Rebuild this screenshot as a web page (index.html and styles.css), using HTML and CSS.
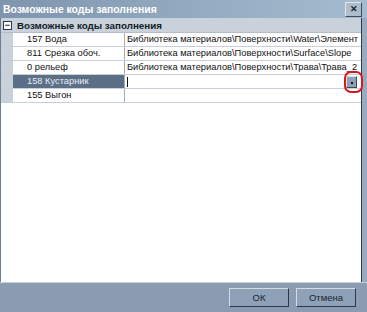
FILE: index.html
```html
<!DOCTYPE html>
<html lang="ru">
<head>
    <meta charset="UTF-8">
    <title>Возможные коды заполнения</title>
<link rel="stylesheet" href="styles.css">
</head>
<body>
    <div class="window">
        <div class="titlebar">
            <span class="title">Возможные коды заполнения</span>
            <span class="close">✕</span>
        </div>
        <div class="body">
            <div class="grid">
                <div class="category">
                    <span class="toggle">−</span>
                    <span class="cat-title">Возможные коды заполнения</span>
                </div>
                <div class="row">
                    <div class="gutter"></div>
                    <div class="name">157 Вода</div>
                    <div class="value">Библиотека материалов\Поверхности\Water\Элемент</div>
                </div>
                <div class="row">
                    <div class="gutter"></div>
                    <div class="name">811 Срезка обоч.</div>
                    <div class="value">Библиотека материалов\Поверхности\Surface\Slope</div>
                </div>
                <div class="row">
                    <div class="gutter"></div>
                    <div class="name">0 рельеф</div>
                    <div class="value">Библиотека материалов\Поверхности\Трава\Трава_2</div>
                </div>
                <div class="row selected">
                    <div class="gutter"></div>
                    <div class="name">158 Кустарник</div>
                    <div class="value editing">
                        <span class="caret"></span>
                        <span class="drop"><span class="dot"></span></span>
                        <span class="ring"></span>
                    </div>
                </div>
                <div class="row">
                    <div class="gutter"></div>
                    <div class="name">155 Выгон</div>
                    <div class="value"></div>
                </div>
                <div class="filler"></div>
            </div>
            <div class="side"></div>
        </div>
        <div class="buttons">
            <button class="btn">ОК</button>
            <button class="btn">Отмена</button>
        </div>
    </div>
</body>
</html>
```

FILE: styles.css
```css
body {
    margin: 0;
    font-family: "Liberation Sans", Arial, sans-serif;
    font-size: 9.3px;
    background-color: #8b9cb2;
}

.window {
    width: 367px;
    height: 312px;
    display: flex;
    flex-direction: column;
    background-color: #8b9cb2;
}

.titlebar {
    height: 18px;
    display: flex;
    align-items: center;
    justify-content: space-between;
    padding: 0 5px 0 3px;
    background: linear-gradient(to right, #7f95ae, #97adc3 60%, #a5bbcf);
    flex-shrink: 0;
}

.title {
    color: #ffffff;
    font-weight: bold;
    font-size: 10.4px;
}

.close {
    width: 15px;
    height: 13px;
    background-color: #aebccb;
    border: 1px solid #3b4b5c;
    border-top-color: #dfe6ee;
    border-left-color: #dfe6ee;
    font-size: 9px;
    font-weight: bold;
    line-height: 13px;
    text-align: center;
    color: #1a2430;
}

.body {
    flex: 1;
    display: flex;
    border-left: 1px solid #6d7f94;
}

.grid {
    flex: 1;
    display: flex;
    flex-direction: column;
    background-color: #ffffff;
    border-right: 1px solid #2e3a47;
    position: relative;
    z-index: 1;
}

.side {
    width: 5px;
    background-color: #9aabbf;
}

.category {
    height: 14px;
    display: flex;
    align-items: center;
    background-color: #c9d1da;
    border-bottom: 1px solid #b5bec8;
}

.toggle {
    width: 7px;
    height: 7px;
    margin: 0 5px 0 2px;
    border: 1px solid #2b3846;
    background-color: #ffffff;
    font-size: 9px;
    line-height: 6px;
    text-align: center;
    font-weight: bold;
    color: #1b2530;
}

.cat-title {
    font-weight: bold;
    font-size: 9.8px;
    color: #141c26;
}

.row {
    height: 13px;
    display: flex;
    border-bottom: 1px solid #c9cfd6;
}

.gutter {
    width: 12px;
    background-color: #c9d1da;
}

.name {
    width: 97px;
    padding-left: 14px;
    line-height: 13px;
    color: #111111;
    border-right: 1px solid #a4adb8;
    white-space: nowrap;
}

.value {
    flex: 1;
    padding-left: 2px;
    line-height: 13px;
    color: #111111;
    white-space: nowrap;
    overflow: hidden;
}

.selected .name {
    background-color: #5b6f87;
    color: #e8edf3;
}

.editing {
    position: relative;
    overflow: visible;
}

.caret {
    display: inline-block;
    width: 1px;
    height: 10px;
    margin-top: 2px;
    background-color: #111111;
}

.drop {
    position: absolute;
    right: 4px;
    top: 1px;
    width: 9px;
    height: 10px;
    background-color: #8ea1b7;
    border: 1px solid #3a4a5b;
    border-top-color: #d9e1ea;
    border-left-color: #d9e1ea;
}

.dot {
    position: absolute;
    left: 4px;
    top: 5px;
    width: 2px;
    height: 2px;
    background-color: #111111;
}

.ring {
    position: absolute;
    right: -2px;
    top: -4px;
    width: 15px;
    height: 18px;
    border: 2px solid #d8191c;
    border-radius: 7px;
}

.filler {
    flex: 1;
}

.buttons {
    height: 29px;
    display: flex;
    justify-content: flex-end;
    align-items: center;
    gap: 7px;
    padding-right: 11px;
    border-top: 1px solid #c7d0da;
    flex-shrink: 0;
}

.btn {
    width: 60px;
    height: 19px;
    padding: 0;
    font-family: "Liberation Sans", Arial, sans-serif;
    font-size: 9.5px;
    color: #1b2530;
    background-color: #8fa1b6;
    border: 1px solid #2b3846;
    border-top-color: #d3dbe4;
    border-left-color: #d3dbe4;
}
```
